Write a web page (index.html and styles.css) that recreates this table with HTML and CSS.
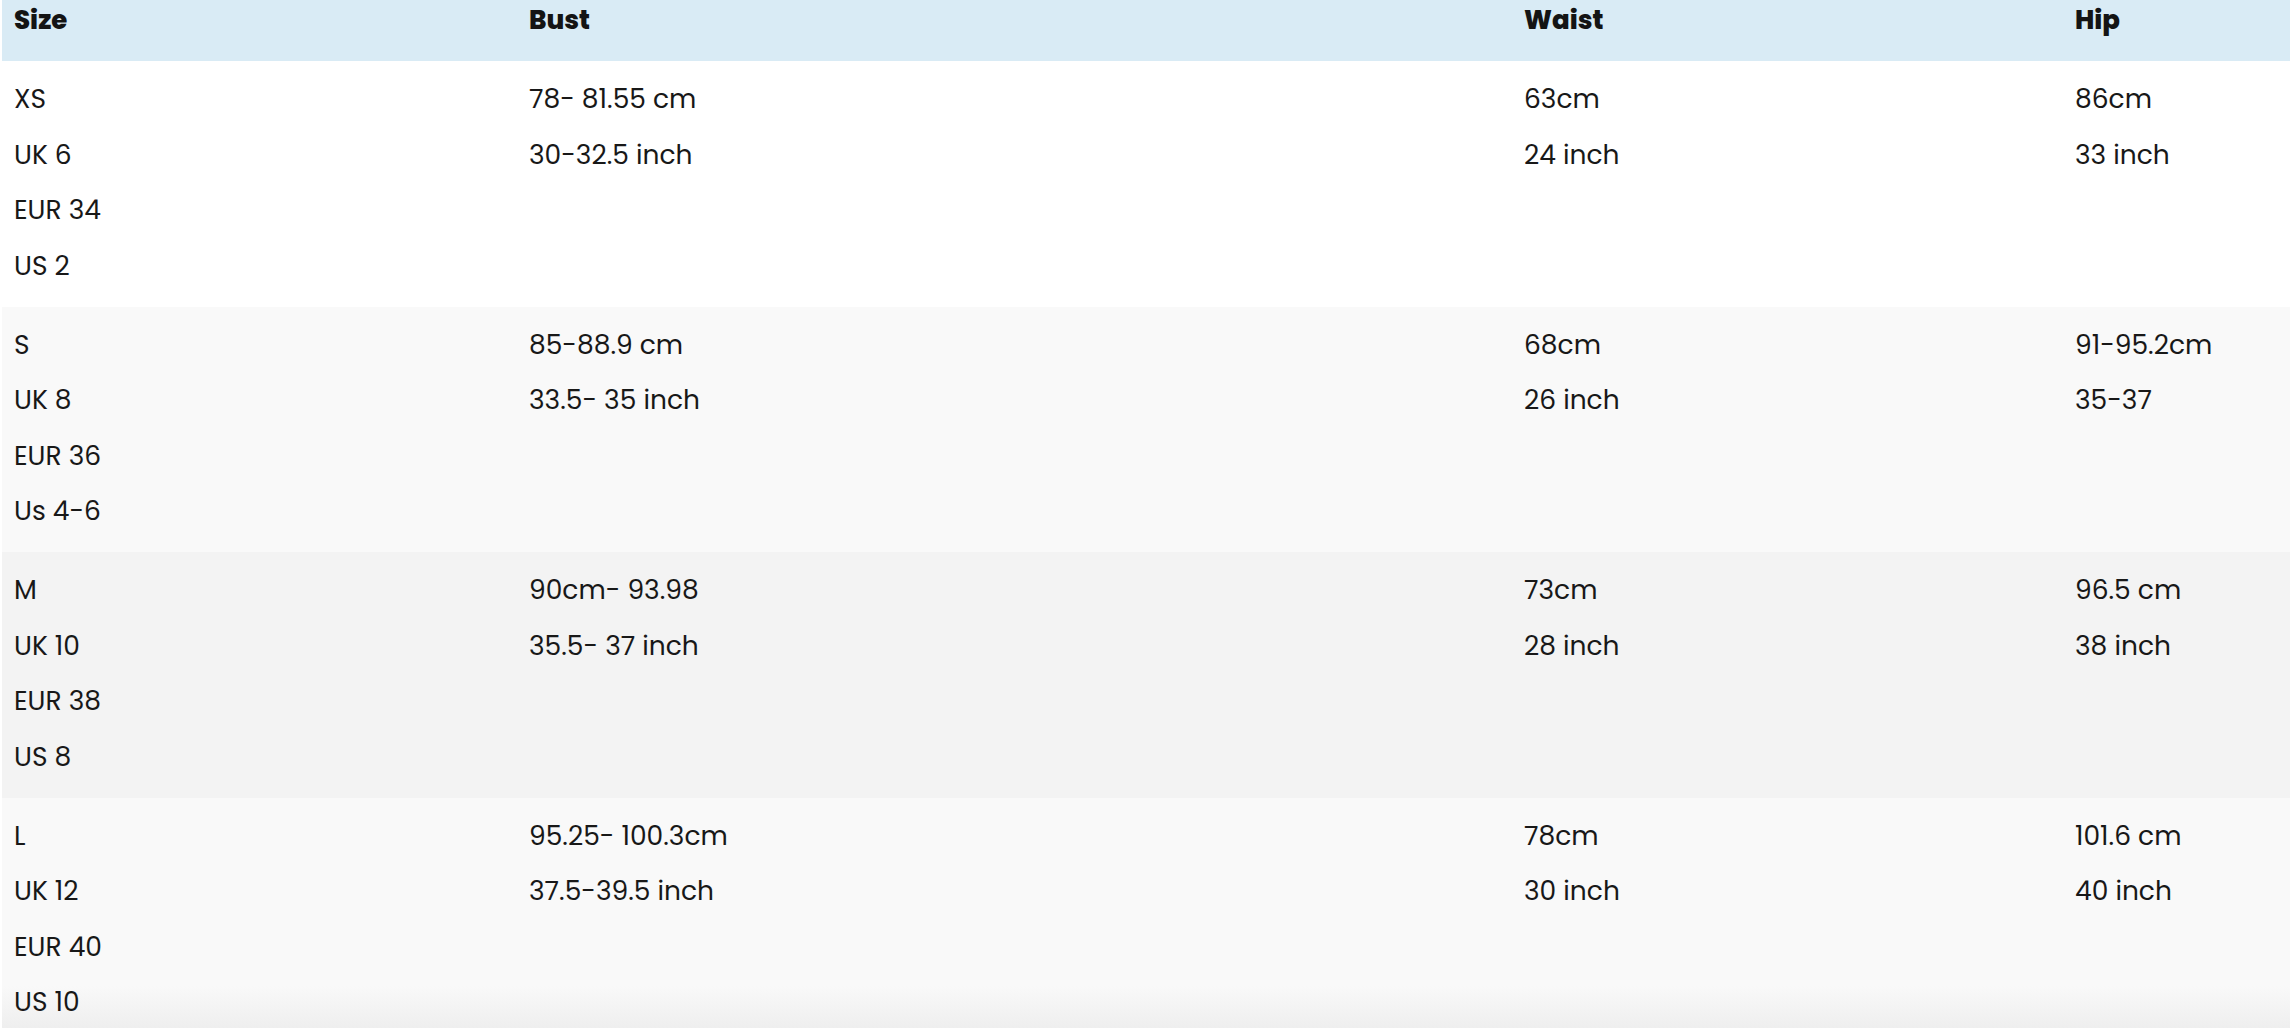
FILE: index.html
```html
<!DOCTYPE html>
<html lang="en">
<head>
<meta charset="utf-8">
<title>Size chart</title>
<link rel="stylesheet" href="styles.css">
</head>
<body>
<table class="chart">
  <colgroup>
    <col class="c-size">
    <col class="c-bust">
    <col class="c-waist">
    <col class="c-hip">
  </colgroup>
  <thead>
    <tr class="head">
      <th>Size</th><th>Bust</th><th>Waist</th><th>Hip</th>
    </tr>
  </thead>
  <tbody>
    <tr class="r1">
      <td><p>XS</p><p>UK 6</p><p>EUR 34</p><p>US 2</p></td>
      <td><p>78- 81.55 cm</p><p>30-32.5 inch</p></td>
      <td><p>63cm</p><p>24 inch</p></td>
      <td><p>86cm</p><p>33 inch</p></td>
    </tr>
    <tr class="r2">
      <td><p>S</p><p>UK 8</p><p>EUR 36</p><p>Us 4-6</p></td>
      <td><p>85-88.9 cm</p><p>33.5- 35 inch</p></td>
      <td><p>68cm</p><p>26 inch</p></td>
      <td><p>91-95.2cm</p><p>35-37</p></td>
    </tr>
    <tr class="r3">
      <td><p>M</p><p>UK 10</p><p>EUR 38</p><p>US 8</p></td>
      <td><p>90cm- 93.98</p><p>35.5- 37 inch</p></td>
      <td><p>73cm</p><p>28 inch</p></td>
      <td><p>96.5 cm</p><p>38 inch</p></td>
    </tr>
    <tr class="r4">
      <td><p>L</p><p>UK 12</p><p>EUR 40</p><p>US 10</p></td>
      <td><p>95.25- 100.3cm</p><p>37.5-39.5 inch</p></td>
      <td><p>78cm</p><p>30 inch</p></td>
      <td><p>101.6 cm</p><p>40 inch</p></td>
    </tr>
  </tbody>
</table>
</body>
</html>
```

FILE: styles.css
```css
html, body {
  margin: 0;
  padding: 0;
  background: #ffffff;
}
body {
  font-family: "Poppins", "Inter", "Lato", sans-serif;
  color: #181818;
  overflow: hidden;
  height: 1028px;
}
.chart {
  border-collapse: collapse;
  table-layout: fixed;
  width: 2288px;
  margin-left: 2px;
}
.c-size { width: 515px; }
.c-bust { width: 995px; }
.c-waist { width: 551px; }
.c-hip { width: 227px; }
.head {
  background: #d9ebf5;
  height: 61px;
}
.head th {
  text-align: left;
  vertical-align: top;
  font-weight: 800;
  font-size: 26px;
  line-height: 40px;
  padding: 0 0 0 12px;
  color: #141414;
}
tbody tr { height: 245.5px; }
tbody td {
  vertical-align: top;
  padding: 10px 0 0 12px;
  font-size: 26.5px;
}
tbody td p {
  margin: 0;
  line-height: 55.5px;
  white-space: nowrap;
}
.r1 { background: #ffffff; }
.r2 { background: #f9f9f9; }
.r3 { background: #f3f3f3; }
.r4 { background: linear-gradient(to bottom, #f9f9f9 0, #f9f9f9 188px, #eeeeee 232px, #ececec 100%); }
```
